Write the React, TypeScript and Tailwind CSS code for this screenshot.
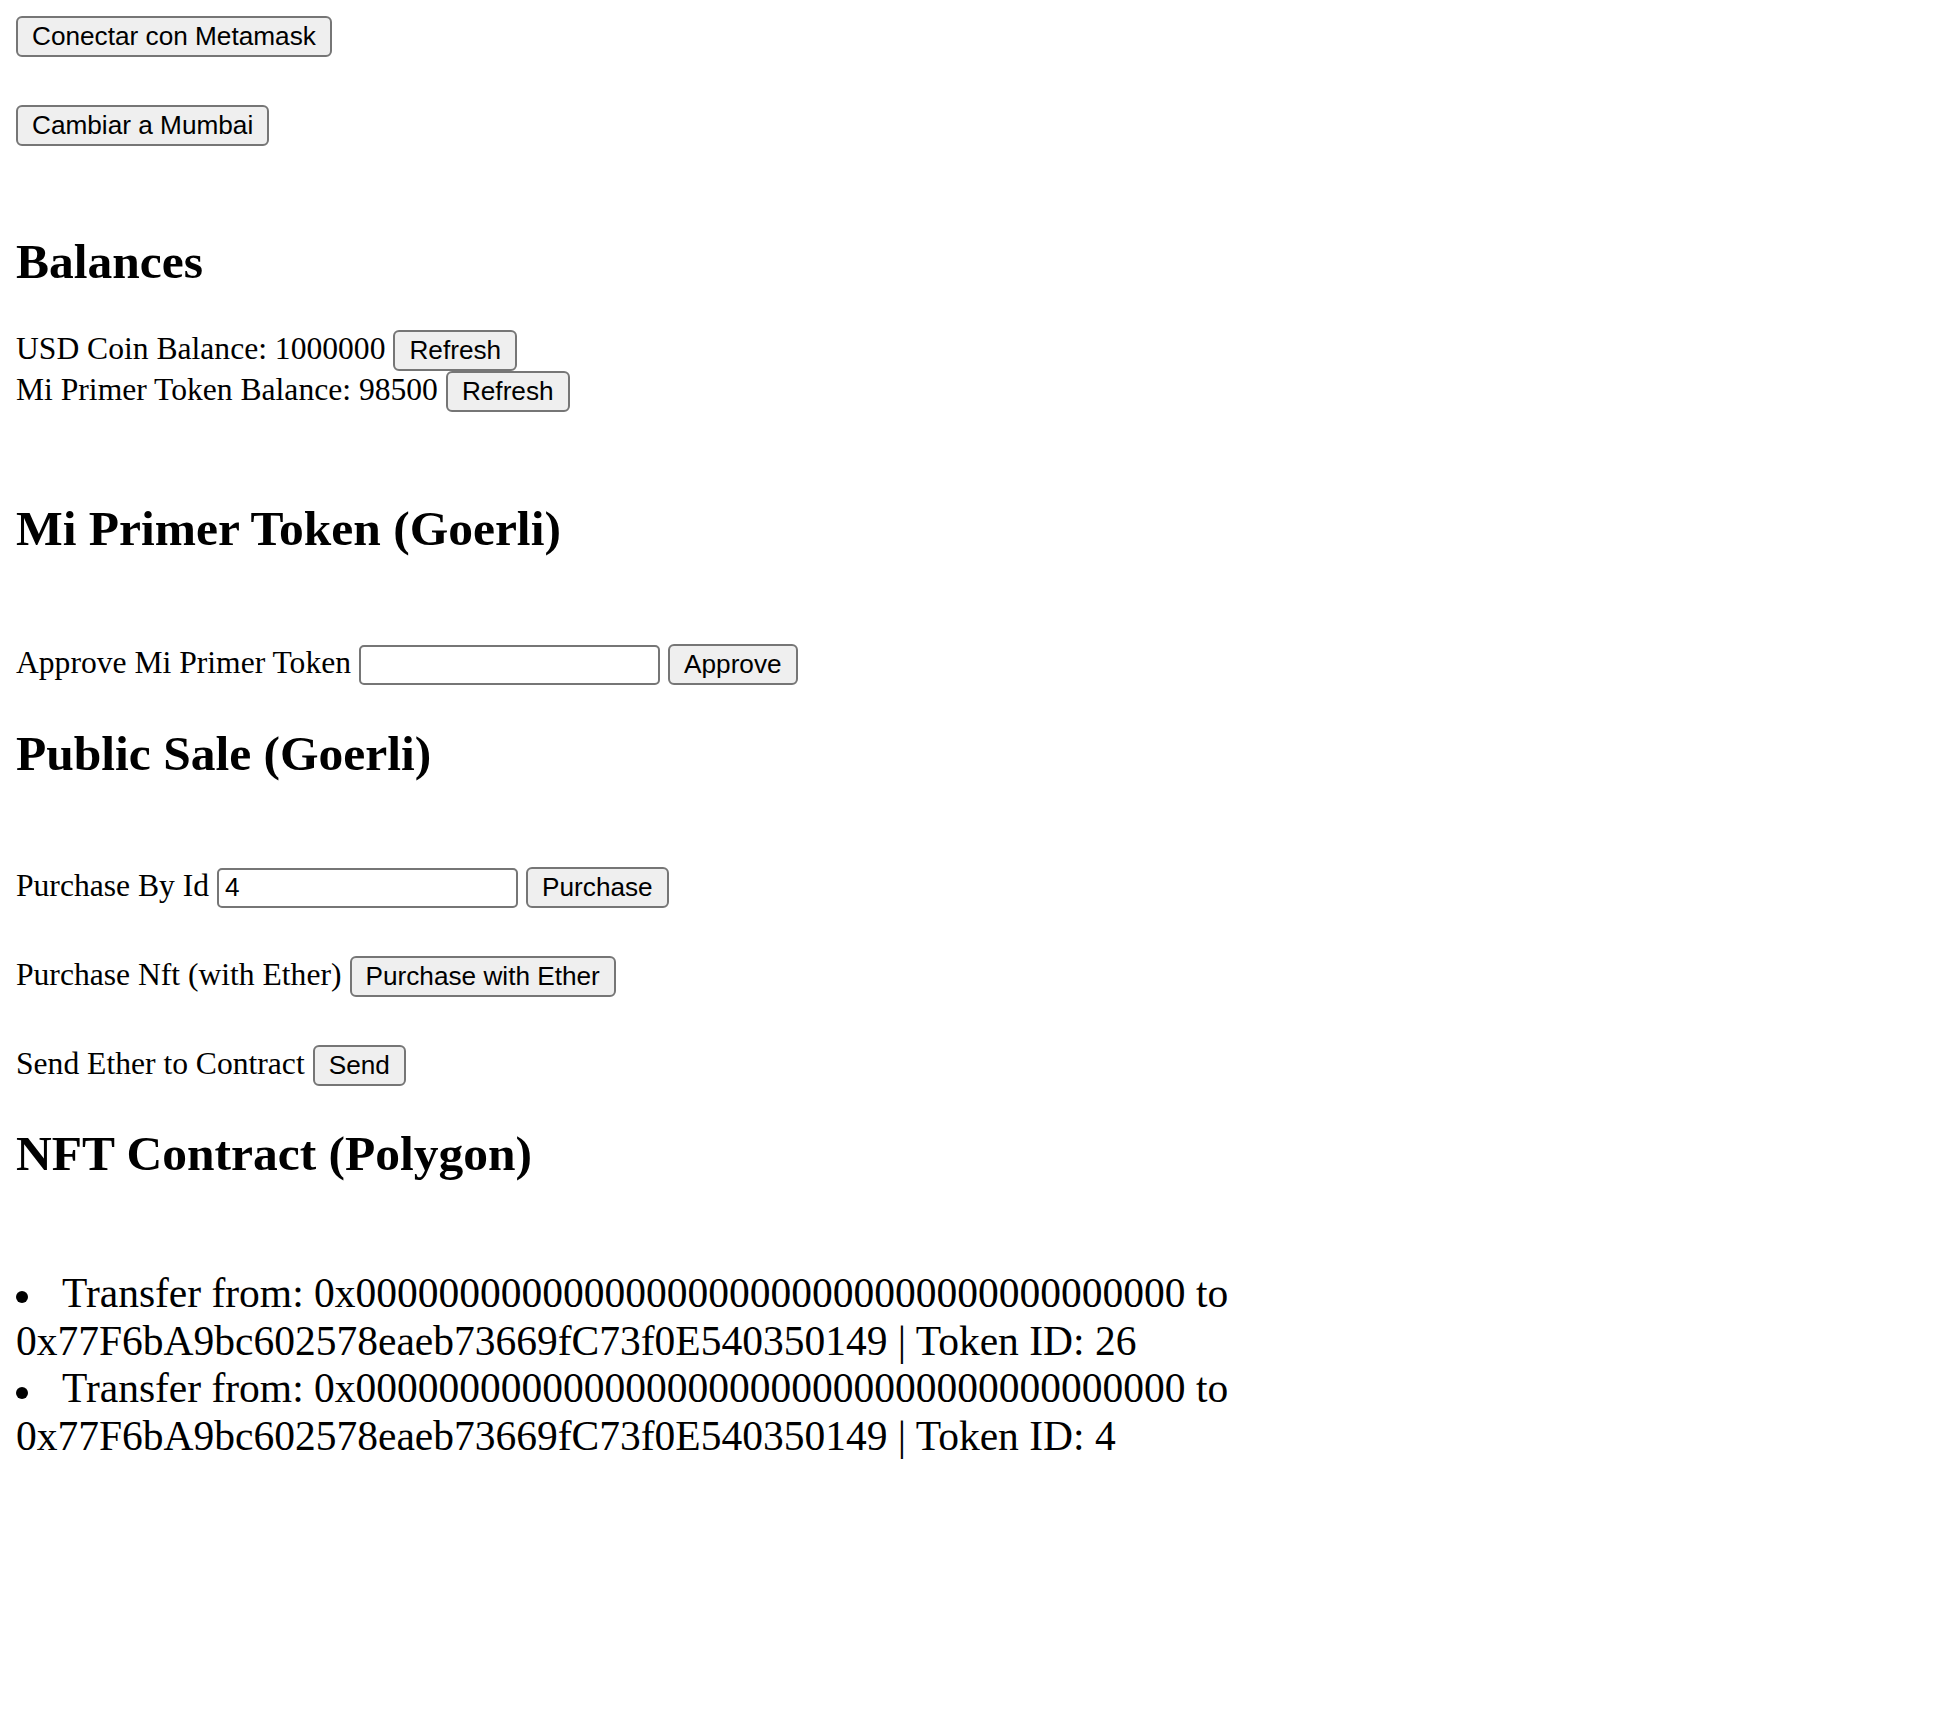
import React from "react";

const btn =
  "h-[41px] px-[14px] border-2 border-[#767676] rounded-[6px] bg-[#efefef] text-black text-[26.2px] leading-none whitespace-nowrap font-['Liberation_Sans',Arial,sans-serif]";

const field =
  "w-[301px] h-[40px] border-2 border-[#767676] rounded-[5px] bg-white px-[6px] text-black text-[26.2px] outline-none font-['Liberation_Sans',Arial,sans-serif]";

function Row({ className = "", children }: { className?: string; children: React.ReactNode }) {
  return <div className={`flex items-center gap-[8px] h-[41px] ${className}`}>{children}</div>;
}

function Label({ children }: { children: React.ReactNode }) {
  return <span className="pb-[3px] text-[31.6px] leading-[36px] whitespace-nowrap">{children}</span>;
}

function Heading({ className = "", children }: { className?: string; children: React.ReactNode }) {
  return <h2 className={`text-[49.5px] leading-[55px] font-bold ${className}`}>{children}</h2>;
}

const transfers = [
  { from: "0x0000000000000000000000000000000000000000", to: "0x77F6bA9bc602578eaeb73669fC73f0E540350149", id: 26 },
  { from: "0x0000000000000000000000000000000000000000", to: "0x77F6bA9bc602578eaeb73669fC73f0E540350149", id: 4 },
];

export default function App() {
  return (
    <div className="min-h-screen bg-white text-black px-[16px] pt-[16px] font-['Liberation_Serif','Times_New_Roman',serif]">
      {/* Wallet */}
      <div className="flex">
        <button className={btn}>Conectar con Metamask</button>
      </div>
      <div className="flex mt-[48px]">
        <button className={btn}>Cambiar a Mumbai</button>
      </div>

      {/* Balances */}
      <Heading className="mt-[88px]">Balances</Heading>
      <Row className="mt-[41px]">
        <Label>USD Coin Balance: 1000000</Label>
        <button className={btn}>Refresh</button>
      </Row>
      <Row>
        <Label>Mi Primer Token Balance: 98500</Label>
        <button className={btn}>Refresh</button>
      </Row>

      {/* Token */}
      <Heading className="mt-[89px]">Mi Primer Token (Goerli)</Heading>
      <Row className="mt-[88px]">
        <Label>Approve Mi Primer Token</Label>
        <input className={field} defaultValue="" />
        <button className={btn}>Approve</button>
      </Row>

      {/* Public sale */}
      <Heading className="mt-[41px]">Public Sale (Goerli)</Heading>
      <Row className="mt-[86px]">
        <Label>Purchase By Id</Label>
        <input className={field} defaultValue="4" />
        <button className={btn}>Purchase</button>
      </Row>
      <Row className="mt-[48px]">
        <Label>Purchase Nft (with Ether)</Label>
        <button className={btn}>Purchase with Ether</button>
      </Row>
      <Row className="mt-[48px]">
        <Label>Send Ether to Contract</Label>
        <button className={btn}>Send</button>
      </Row>

      {/* NFT */}
      <Heading className="mt-[40px]">NFT Contract (Polygon)</Heading>
      <ul className="mt-[89px] text-[41.5px] leading-[47.7px]">
        {transfers.map((t) => (
          <li key={t.id}>
            <span className="inline-block w-[12px] h-[12px] rounded-full bg-black align-middle mr-[34px]" />
            Transfer from: {t.from} to {t.to} | Token ID: {t.id}
          </li>
        ))}
      </ul>
    </div>
  );
}
